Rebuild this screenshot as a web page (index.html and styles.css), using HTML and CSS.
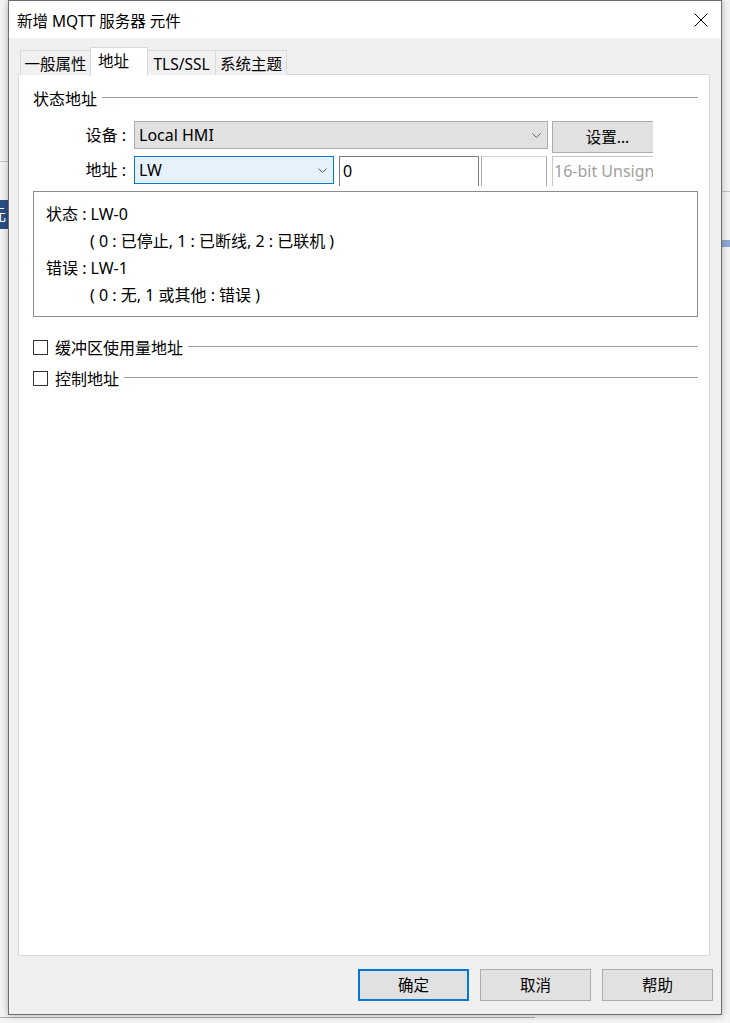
FILE: index.html
```html
<!DOCTYPE html>
<html lang="zh-CN">
<head>
  <meta charset="UTF-8">
  <title>新增 MQTT 服务器 元件</title>
  <link rel="stylesheet" href="styles.css">
</head>
<body>

  <div class="desk">
    <!-- bits of the windows behind the dialog -->
    <div class="behind behind-line-left"></div>
    <div class="behind behind-tab-left"><span>元</span></div>
    <div class="behind behind-line-right"></div>
    <div class="behind behind-tab-right"></div>
    <div class="behind behind-line-bottom"></div>

    <div class="dialog">
      <div class="titlebar">
        <span class="title">新增 MQTT 服务器 元件</span>
        <svg class="close" width="14" height="14" viewBox="0 0 14 14">
          <path d="M0.5 0.5 L13.5 13.5 M13.5 0.5 L0.5 13.5" stroke="#000" stroke-width="1" fill="none"/>
        </svg>
      </div>

      <div class="dlg-body">
        <div class="tabs">
          <div class="tab tab-general">一般属性</div>
          <div class="tab tab-active">地址</div>
          <div class="tab tab-tls">TLS/SSL</div>
          <div class="tab tab-topic">系统主题</div>
        </div>

        <div class="panel">
          <div class="group-head">
            <span>状态地址</span>
            <i class="rule"></i>
          </div>

          <div class="fields">
            <div class="row row-device">
              <label class="lbl">设备 :</label>
              <div class="combo combo-device">
                <span>Local HMI</span>
                <svg class="chevron" width="9" height="5" viewBox="0 0 9 5"><path d="M0.5 0.5 L4.5 4.5 L8.5 0.5" stroke="#606060" fill="none"/></svg>
              </div>
              <div class="btn btn-set">设置...</div>
            </div>
            <div class="row row-addr">
              <label class="lbl">地址 :</label>
              <div class="combo combo-addr">
                <span>LW</span>
                <svg class="chevron" width="9" height="5" viewBox="0 0 9 5"><path d="M0.5 0.5 L4.5 4.5 L8.5 0.5" stroke="#606060" fill="none"/></svg>
              </div>
              <div class="edit edit-num">0</div>
              <div class="edit edit-blank"></div>
              <div class="edit edit-type">16-bit Unsigned</div>
            </div>
          </div>

          <div class="info">
            <div>状态 : LW-0</div>
            <div class="indent">( 0 : 已停止, 1 : 已断线, 2 : 已联机 )</div>
            <div>错误 : LW-1</div>
            <div class="indent">( 0 : 无, 1 或其他 : 错误 )</div>
          </div>

          <div class="check-row check-first">
            <span class="box"></span>
            <span>缓冲区使用量地址</span>
            <i class="rule"></i>
          </div>
          <div class="check-row">
            <span class="box"></span>
            <span>控制地址</span>
            <i class="rule"></i>
          </div>
        </div>

        <div class="buttons">
          <div class="btn btn-ok">确定</div>
          <div class="btn">取消</div>
          <div class="btn">帮助</div>
        </div>
      </div>
    </div>
  </div>

</body>
</html>
```

FILE: styles.css
```css
body {
  margin: 0;
  font-family: "Noto Sans", "Noto Sans CJK SC", sans-serif;
  font-size: 16px;
  color: #000;
  background-color: #f2f2f2;
}

.desk {
  position: relative;
  width: 730px;
  height: 1023px;
  overflow: hidden;
  background-color: #f4f4f4;
}

/* other windows peeking out */
.behind {
  position: absolute;
}

.behind-line-left {
  left: 0;
  top: 161px;
  width: 8px;
  height: 1px;
  background-color: #c4c4c4;
}

.behind-tab-left {
  left: 0;
  top: 200px;
  width: 8px;
  height: 29px;
  background-color: #2a4f86;
  overflow: hidden;
}

.behind-tab-left span {
  display: block;
  margin-left: -9px;
  line-height: 29px;
  color: #fff;
  font-size: 15px;
}

.behind-line-right {
  left: 722px;
  top: 191px;
  width: 8px;
  height: 1px;
  background-color: #c2c2c2;
}

.behind-tab-right {
  left: 722px;
  top: 240px;
  width: 8px;
  height: 7px;
  background-color: #8eaad4;
}

.behind-line-bottom {
  left: 0;
  top: 1017px;
  width: 535px;
  height: 1px;
  background-color: #a8a8a8;
}

.dialog {
  position: relative;
  box-sizing: border-box;
  width: 714px;
  height: 1015px;
  margin-left: 8px;
  border: 1px solid #6e6e6e;
  background-color: #f0f0f0;
  box-shadow: 0 0 7px rgba(0,0,0,0.3);
}

.titlebar {
  display: flex;
  align-items: center;
  justify-content: space-between;
  height: 37px;
  padding: 0 13px 0 8px;
  background-color: #fff;
}

.title {
  font-size: 15.5px;
  line-height: 20px;
  padding-top: 2px;
}

.close {
  display: block;
  margin-top: 1px;
}

.dlg-body {
  padding: 10px 0 0 9px;
}

/* tabs */
.tabs {
  display: flex;
  align-items: flex-end;
  height: 27px;
  padding-left: 2px;
  position: relative;
  z-index: 1;
  margin-bottom: -1px;
}

.tab {
  box-sizing: border-box;
  height: 25px;
  margin-left: -1px;
  border: 1px solid #d9d9d9;
  border-bottom: none;
  background-color: #f0f0f0;
  font-size: 15.5px;
  line-height: 26px;
  text-align: center;
  white-space: nowrap;
}

.tab-general { width: 71px; margin-left: 0; }
.tab-tls { width: 69px; }
.tab-topic { width: 72px; }

.tab-active {
  width: 58px;
  height: 29px;
  background-color: #fff;
  line-height: 27px;
  text-align: left;
  padding-left: 7px;
  margin-bottom: -1px;
}

.panel {
  box-sizing: border-box;
  width: 692px;
  height: 882px;
  border: 1px solid #d9d9d9;
  background-color: #fff;
  padding: 14px 11px 0 14px;
}

.group-head {
  display: flex;
  align-items: center;
  height: 20px;
  line-height: 20px;
}

.rule {
  flex: 1;
  height: 1px;
  background-color: #a0a0a0;
  margin-left: 5px;
  margin-top: -3px;
}

/* address fields */
.fields {
  width: 620px;
  overflow: hidden;
  margin-top: 12px;
}

.row {
  display: flex;
  align-items: flex-start;
  white-space: nowrap;
}

.row-device {
  height: 29px;
  margin-bottom: 6px;
}

.row-addr {
  height: 30px;
}

.lbl {
  flex: none;
  width: 93px;
  margin-right: 8px;
  text-align: right;
  line-height: 28px;
}

.combo {
  flex: none;
  box-sizing: border-box;
  display: flex;
  align-items: center;
  justify-content: space-between;
  height: 28px;
  padding: 0 6px 0 4px;
  border: 1px solid #adadad;
  background-color: #e1e1e1;
  line-height: 26px;
}

.chevron {
  display: block;
}

.combo-device {
  width: 414px;
}

.combo-addr {
  width: 200px;
  border-color: #0078d7;
  background-color: #e5f1fb;
}

.btn-set {
  flex: none;
  width: 110px;
  height: 29px;
  margin-left: 4px;
}

.edit {
  flex: none;
  box-sizing: border-box;
  height: 30px;
  border: 1px solid #7a7a7a;
  border-bottom: none;
  background-color: #fff;
  line-height: 28px;
  padding-left: 3px;
  overflow: hidden;
}

.edit-num {
  width: 140px;
  margin-left: 5px;
}

.edit-blank {
  width: 66px;
  margin-left: 2px;
  border-color: #a8a8a8;
  border-top-color: #d4d4d4;
}

.edit-type {
  width: 110px;
  margin-left: 5px;
  padding-left: 1px;
  border-color: #c8c8c8;
  color: #a0a0a0;
}

/* status / error info box */
.info {
  box-sizing: border-box;
  height: 126px;
  margin-top: 5px;
  border: 1px solid #8c8c8c;
  padding: 9px 12px 7px;
  line-height: 27px;
}

.indent {
  padding-left: 44px;
}

.check-row {
  display: flex;
  align-items: center;
  height: 22px;
  margin-top: 9px;
}

.check-first {
  margin-top: 19px;
}

.box {
  box-sizing: border-box;
  width: 15px;
  height: 15px;
  border: 1px solid #333;
  margin-right: 7px;
}

.check-row .rule {
  margin-top: -1px;
}

/* dialog buttons */
.buttons {
  display: flex;
  justify-content: flex-end;
  gap: 11px;
  margin-top: 13px;
  padding-right: 8px;
}

.btn {
  box-sizing: border-box;
  width: 111px;
  height: 32px;
  border: 1px solid #adadad;
  background-color: #e1e1e1;
  text-align: center;
  line-height: 30px;
  font-size: 15.5px;
}

.btn-ok {
  border: 2px solid #0078d7;
  line-height: 28px;
}
```
